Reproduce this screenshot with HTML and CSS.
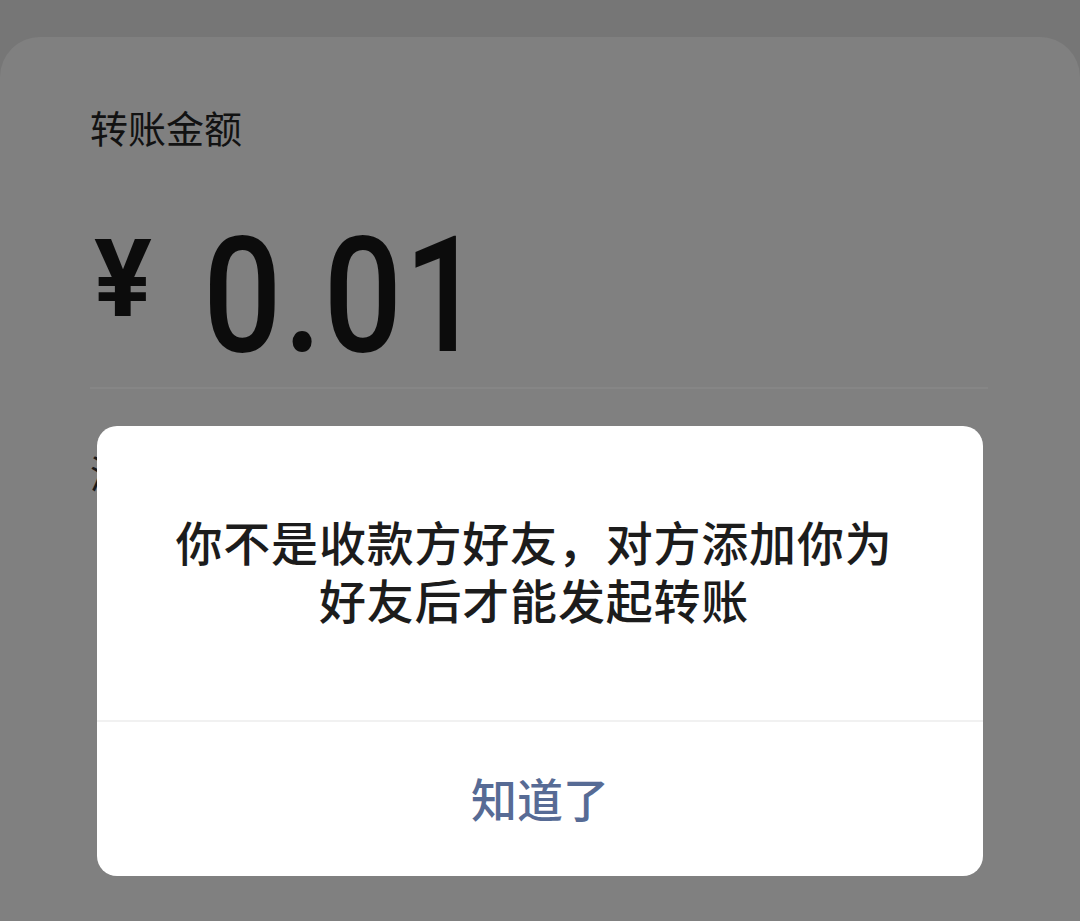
FILE: index.html
```html
<!DOCTYPE html>
<html lang="zh-CN">
<head>
<meta charset="utf-8">
<title>转账</title>
<link rel="stylesheet" href="styles.css">
</head>
<body>
<div class="page">
  <div class="card">
    <div class="label">转账金额</div>
    <div class="amount-row">
      <span class="currency">¥</span>
      <span class="amount">0.01</span>
    </div>
    <div class="divider"></div>
    <div class="note">添加转账说明</div>
  </div>
</div>
<div class="dialog">
  <div class="dialog-body">
    <p class="dialog-text">你不是收款方好友，对方添加你为<br>好友后才能发起转账</p>
  </div>
  <div class="dialog-footer">
    <span class="dialog-btn">知道了</span>
  </div>
</div>
</body>
</html>
```

FILE: styles.css
```css
html, body {
  margin: 0;
  padding: 0;
}
body {
  width: 1080px;
  height: 921px;
  overflow: hidden;
  background: #767676;
  font-family: "Noto Sans CJK SC", "Noto Sans", sans-serif;
  position: relative;
}
.page {
  padding-top: 37px;
}
.card {
  background: #808080;
  border-radius: 40px 40px 0 0;
  height: 884px;
  padding: 63px 92px 0 90px;
  box-sizing: border-box;
}
.label {
  font-size: 38px;
  line-height: 53px;
  color: #121212;
}
.amount-row {
  display: flex;
  align-items: flex-start;
  margin-top: 60px;
  height: 174px;
}
.currency {
  font-family: Roboto, "Liberation Sans", sans-serif;
  font-weight: 700;
  font-size: 108px;
  line-height: 1;
  color: #0c0c0c;
  margin-left: 4px;
  margin-top: 12px;
}
.amount {
  font-family: Roboto, "Liberation Sans", sans-serif;
  font-weight: 500;
  font-size: 161px;
  line-height: 1;
  color: #0c0c0c;
  margin-left: 51px;
  margin-top: 3px;
  letter-spacing: 2px;
  display: inline-block;
  transform: scaleX(0.86);
  transform-origin: left top;
}
.divider {
  height: 2px;
  background: #868686;
}
.note {
  margin-top: 56px;
  font-size: 38px;
  line-height: 53px;
  color: #1a1a1a;
}
.dialog {
  position: absolute;
  left: 97px;
  top: 426px;
  width: 886px;
  height: 450px;
  background: #ffffff;
  border-radius: 20px;
  display: flex;
  flex-direction: column;
}
.dialog-body {
  height: 296px;
  display: flex;
  align-items: center;
  justify-content: center;
  border-bottom: 2px solid #f1f1f1;
  box-sizing: border-box;
  padding: 0 12px 6px 0;
}
.dialog-text {
  margin: 0;
  font-size: 47px;
  font-weight: 500;
  line-height: 58px;
  letter-spacing: 0.8px;
  color: #1c1c1c;
  text-align: center;
}
.dialog-footer {
  flex: 1;
  display: flex;
  align-items: center;
  justify-content: center;
  padding-bottom: 4px;
}
.dialog-btn {
  font-size: 46px;
  font-weight: 500;
  color: #576b95;
}
```
